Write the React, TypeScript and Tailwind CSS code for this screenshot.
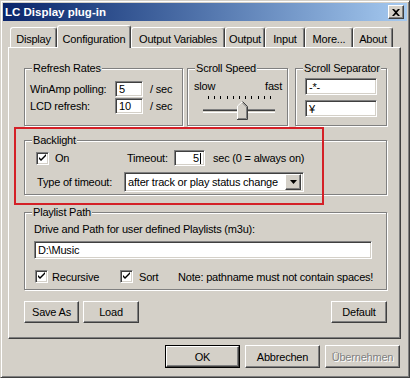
import React from 'react';

const raised =
  'border border-t-white border-l-white border-r-[#404040] border-b-[#404040] shadow-[inset_-1px_-1px_0_#808080]';
const sunken =
  'border border-t-[#808080] border-l-[#808080] border-r-white border-b-white shadow-[inset_1px_1px_0_#404040,inset_-1px_-1px_0_#D4D0C8]';

function Group({ title, className, children }: { title: string; className?: string; children?: React.ReactNode }) {
  return (
    <div className={`relative border border-[#808080] shadow-[inset_1px_1px_0_#fff,1px_1px_0_#fff] ${className ?? ''}`}>
      <span className="absolute -top-[8px] left-[7px] bg-[#D4D0C8] px-[1px] leading-[14px]">{title}</span>
      {children}
    </div>
  );
}

function Edit({ className, children }: { className?: string; children?: React.ReactNode }) {
  return <div className={`flex items-center bg-white px-[3px] leading-[12px] ${sunken} ${className ?? ''}`}>{children}</div>;
}

function CheckBox() {
  return (
    <div className={`w-[13px] h-[13px] bg-white shrink-0 ${sunken}`}>
      <svg width="11" height="11" viewBox="0 0 11 11">
        <path d="M2 4 L2 6 L4 8 L9 3 L9 1 L4 6 Z" fill="#000" />
      </svg>
    </div>
  );
}

function Button({ className, children }: { className?: string; children?: React.ReactNode }) {
  return (
    <div className={`flex items-center justify-center bg-[#D4D0C8] ${raised} ${className ?? ''}`}>{children}</div>
  );
}

const tabs = [
  { label: 'Display', w: 'w-[47px]' },
  { label: 'Configuration', w: 'w-[74px]', active: true },
  { label: 'Output Variables', w: 'w-[94px]' },
  { label: 'Output', w: 'w-[40px]' },
  { label: 'Input', w: 'w-[40px]' },
  { label: 'More...', w: 'w-[48px]' },
  { label: 'About', w: 'w-[40px]' },
];

export default function App() {
  return (
    <div className="w-[410px] h-[378px] bg-[#D4D0C8] p-[2px] flex flex-col whitespace-nowrap border border-t-[#D4D0C8] border-l-[#D4D0C8] border-r-[#404040] border-b-[#404040] shadow-[inset_1px_1px_0_#fff,inset_-1px_-1px_0_#808080] font-['Liberation_Sans',Arial,sans-serif] text-[11px] tracking-[-0.2px] text-black leading-[14px]">
      {/* title bar */}
      <div className="h-[18px] flex items-center justify-between bg-linear-to-r from-[#0A246A] to-[#A6CAF0] pl-[2px] pr-[3px]">
        <span className="text-white font-bold text-[11.5px] tracking-normal">LC Display plug-in</span>
        <Button className="w-[16px] h-[14px]">
          <svg width="8" height="7" viewBox="0 0 8 7">
            <path d="M0 0h2l2 2 2-2h2L5 3.5 8 7H6L4 5 2 7H0l3-3.5z" fill="#000" />
          </svg>
        </Button>
      </div>

      {/* tabs */}
      <div className="flex items-end h-[26px] pl-[7px]">
        {tabs.map((t) =>
          t.active ? (
            <div
              key={t.label}
              className={`${t.w} h-[23px] -mb-[1px] relative z-10 bg-[#D4D0C8] flex justify-center pt-[6px] rounded-t-[3px] border-t border-l border-r border-t-white border-l-white border-r-[#404040] shadow-[inset_-1px_0_0_#808080]`}
            >
              {t.label}
            </div>
          ) : (
            <div
              key={t.label}
              className={`${t.w} h-[20px] flex justify-center pt-[4px] rounded-t-[3px] border-t border-l border-r border-t-white border-l-white border-r-[#404040] shadow-[inset_-1px_0_0_#808080]`}
            >
              {t.label}
            </div>
          )
        )}
      </div>

      {/* panel */}
      <div className="relative ml-[5px] w-[393px] h-[292px] flex flex-col pt-[20px] pl-[15px] pr-[13px] border border-t-white border-l-white border-r-[#404040] border-b-[#404040] shadow-[inset_-1px_-1px_0_#808080]">
        <div className="flex h-[58px]">
          <Group title="Refresh Rates" className="w-[159px]">
            <div className="flex flex-col gap-[1px] pl-[5px] pt-[12px]">
              <div className="flex items-center h-[16px]">
                <span className="w-[85px]">WinAmp polling:</span>
                <Edit className="w-[28px] h-[16px]">5</Edit>
                <span className="ml-[7px]">/ sec</span>
              </div>
              <div className="flex items-center h-[16px]">
                <span className="w-[85px]">LCD refresh:</span>
                <Edit className="w-[28px] h-[16px]">10</Edit>
                <span className="ml-[7px]">/ sec</span>
              </div>
            </div>
          </Group>

          <Group title="Scroll Speed" className="w-[101px] ml-[4px]">
            <div className="flex justify-between pl-[6px] pr-[5px] pt-[11px] leading-[12px]">
              <span>slow</span>
              <span>fast</span>
            </div>
            <svg width="99" height="31" viewBox="0 0 99 31" className="block">
              {Array.from({ length: 11 }).map((_, i) => (
                <rect key={i} x={20 + Math.round(i * 6.2)} y={4} width={1} height={3} fill="#000" />
              ))}
              <rect x="15" y="17" width="72" height="1" fill="#808080" />
              <rect x="15" y="18" width="72" height="1" fill="#404040" />
              <rect x="15" y="19" width="72" height="1" fill="#D4D0C8" />
              <rect x="15" y="20" width="72" height="1" fill="#fff" />
              <path d="M49 14 L54.5 9 L60 14 L60 28 L49 28 Z" fill="#D4D0C8" />
              <path d="M49.5 27.5 L49.5 14 L54.5 9.5" fill="none" stroke="#fff" />
              <path d="M54.5 9.5 L59.5 14.5 L59.5 27.5 L49 27.5" fill="none" stroke="#404040" />
              <path d="M54.5 11 L58.5 15 L58.5 26.5 L50 26.5" fill="none" stroke="#808080" />
            </svg>
          </Group>

          <Group title="Scroll Separator" className="flex-1 ml-[7px]">
            <div className="flex flex-col gap-[5px] pl-[9px] pt-[9px]">
              <Edit className="w-[72px] h-[17px]">-*-</Edit>
              <Edit className="w-[72px] h-[17px]">¥</Edit>
            </div>
          </Group>
        </div>

        <Group title="Backlight" className="mt-[14px] h-[55px]">
          <div className="flex flex-col pt-[9px]">
            <div className="flex items-center h-[16px]">
              <div className="w-[102px] flex items-center pl-[11px]">
                <CheckBox />
                <span className="ml-[6px]">On</span>
              </div>
              <span className="w-[47px]">Timeout:</span>
              <Edit className="w-[31px] h-[16px] justify-end">
                5<span className="w-[1px] h-[11px] bg-black ml-[1px]" />
              </Edit>
              <span className="ml-[8px]">sec (0 = always on)</span>
            </div>
            <div className="flex items-center h-[20px] mt-[6px]">
              <span className="w-[99px] pl-[12px]">Type of timeout:</span>
              <div className={`w-[180px] h-[20px] flex items-center bg-white pl-[3px] pr-[2px] ${sunken}`}>
                <span className="flex-1">after track or play status change</span>
                <Button className="w-[16px] h-[16px]">
                  <svg width="7" height="4" viewBox="0 0 7 4">
                    <path d="M0 0h7L3.5 4z" fill="#000" />
                  </svg>
                </Button>
              </div>
            </div>
          </div>
        </Group>

        <Group title="Playlist Path" className="mt-[17px] h-[78px]">
          <div className="flex flex-col pl-[9px] pt-[9px]">
            <span>Drive and Path for user defined Playlists (m3u):</span>
            <Edit className="w-[338px] h-[18px] mt-[5px]">D:\Music</Edit>
            <div className="flex items-center h-[13px] mt-[11px]">
              <div className="w-[86px] flex items-center pl-[1px]">
                <CheckBox />
                <span className="ml-[4px]">Recursive</span>
              </div>
              <div className="w-[58px] flex items-center">
                <CheckBox />
                <span className="ml-[6px]">Sort</span>
              </div>
              <span>Note: pathname must not contain spaces!</span>
            </div>
          </div>
        </Group>

        <div className="flex mt-[11px] h-[22px]">
          <Button className="w-[55px]">Save As</Button>
          <Button className="w-[56px] ml-[4px]">Load</Button>
          <Button className="w-[56px] ml-auto">Default</Button>
        </div>

        <div className="absolute left-[5px] top-[79px] w-[310px] h-[78px] border-2 border-[#D42027] pointer-events-none" />
      </div>

      {/* dialog buttons */}
      <div className="flex justify-end gap-[5px] mt-[6px] pr-[7px]">
        <div className="w-[75px] h-[23px] border border-black">
          <Button className="w-full h-full">OK</Button>
        </div>
        <Button className="w-[75px] h-[23px]">Abbrechen</Button>
        <Button className="w-[75px] h-[23px] text-[#808080] [text-shadow:1px_1px_0_#fff]">Übernehmen</Button>
      </div>
    </div>
  );
}
